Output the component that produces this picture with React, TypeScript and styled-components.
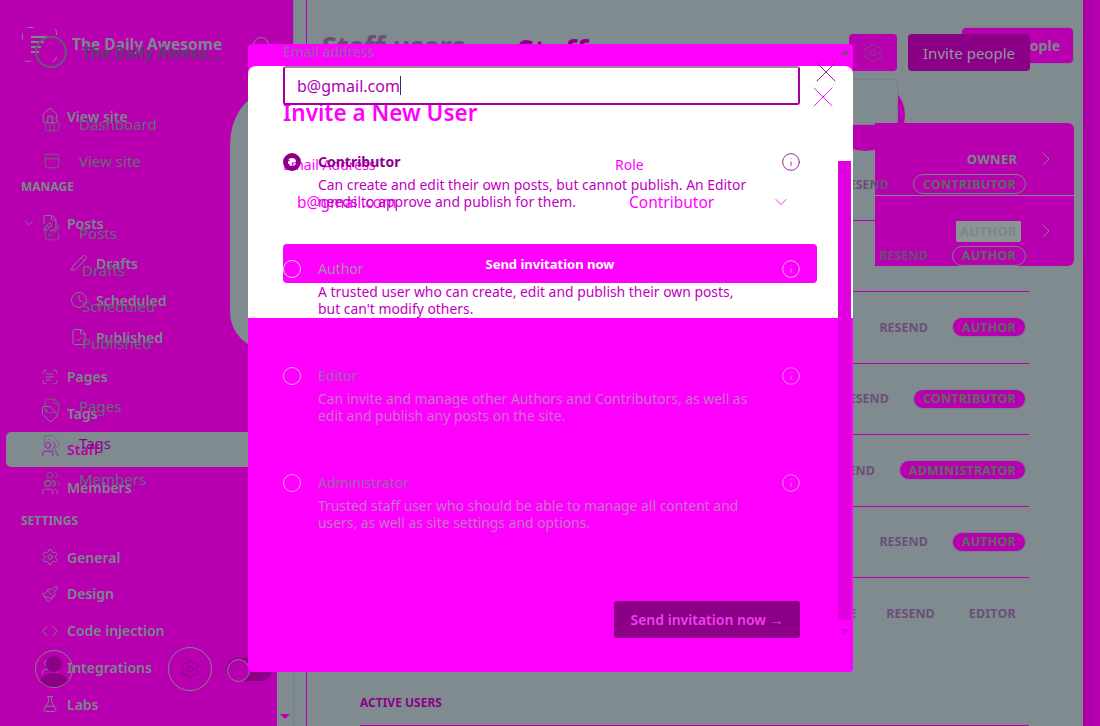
import React from 'react';
import styled, { createGlobalStyle } from 'styled-components';
import {
  ChevronDown,
  ChevronRight,
  Clock,
  Code,
  FileCheck,
  FilePen,
  FlaskConical,
  House,
  Info,
  PanelTop,
  Paintbrush,
  Pencil,
  ScanText,
  Settings,
  SquarePen,
  StickyNote,
  Tag,
  Users,
  X,
} from 'lucide-react';

const colors = {
  grey: '#808b90',
  plum: '#b800b0',
  deep: '#8c0088',
  magenta: '#ff00ff',
  ink: '#6b4f7a',
  ghost: '#78888b',
};

const GlobalStyle = createGlobalStyle`
  html, body {
    margin: 0;
    padding: 0;
    height: 100%;
    overflow: hidden;
    font-family: "Noto Sans", "Open Sans", sans-serif;
  }
  * { box-sizing: border-box; }
`;

const Page = styled.div`
  position: relative;
  width: 1100px;
  height: 726px;
  display: flex;
  overflow: hidden;
  background: ${colors.grey};
`;

/* sidebar */
const Sidebar = styled.aside`
  position: relative;
  flex: 0 0 294px;
  height: 100%;
  background: ${colors.plum};
  border-right: 1px solid #75828a;

  &::before {
    content: '';
    position: absolute;
    left: 230px;
    top: 95px;
    width: 64px;
    height: 255px;
    background: ${colors.grey};
    border-radius: 34px 0 0 38px / 50px 0 0 38px;
  }

  &::after {
    content: '';
    position: absolute;
    right: 0;
    bottom: 0;
    width: 16px;
    height: 60px;
    background: ${colors.grey};
  }
`;

const SideNotch = styled.span`
  position: absolute;
  left: 280px;
  bottom: 7px;
  z-index: 1;
  border-left: 5px solid transparent;
  border-right: 5px solid transparent;
  border-top: 5px solid ${colors.plum};
`;

const NavLayer = styled.nav<{ $top: number }>`
  position: absolute;
  inset: ${({ $top }) => $top}px 0 auto 0;
  display: flex;
  flex-direction: column;
`;

const Brand = styled.div<{ $left: number; $top: number; $dark?: boolean }>`
  position: absolute;
  left: ${({ $left }) => $left}px;
  top: ${({ $top }) => $top}px;
  font-size: 15.5px;
  line-height: 20px;
  font-weight: 700;
  white-space: nowrap;
  color: ${({ $dark }) => ($dark ? '#5d3a72' : colors.ghost)};
`;

const LogoMark = styled.svg`
  position: absolute;
  left: 22px;
  top: 27px;
`;

const SectionTitle = styled.div<{ $gap?: number }>`
  height: 18px;
  margin: ${({ $gap }) => $gap || 0}px 0 9px 21px;
  font-size: 12px;
  line-height: 18px;
  font-weight: 700;
  color: ${colors.ghost};
`;

const NavRow = styled.div<{ $sub?: boolean; $active?: boolean; $gap?: number; $dark?: boolean; $left: number }>`
  position: relative;
  height: ${({ $active, $dark }) => ($active ? 34.8 : $dark ? 36.5 : 36.8)}px;
  margin: ${({ $gap }) => $gap || 0}px 0 ${({ $active }) => ($active ? 2 : 0)}px 6px;
  padding-left: ${({ $left, $sub, $dark }) => $left - 6 + ($sub ? ($dark ? 39 : 29) : 0)}px;
  display: flex;
  align-items: center;
  gap: ${({ $dark, $sub }) => ($dark ? ($sub ? 0 : 18) : 8)}px;
  font-size: ${({ $dark }) => ($dark ? 15 : 14)}px;
  font-weight: ${({ $dark }) => ($dark ? 400 : 600)};
  color: ${({ $dark, $active }) => ($active ? colors.plum : $dark ? '#5f6f74' : colors.ghost)};
  background: ${({ $active }) => ($active ? colors.grey : 'transparent')};
  border-radius: 5px 0 0 5px;
  white-space: nowrap;

  svg { flex: none; }
`;

const DarkLabel = styled.span<{ $accent?: boolean }>`
  color: ${({ $accent }) => ($accent ? colors.deep : 'inherit')};
`;

const Caret = styled.span`
  position: absolute;
  left: 16px;
  top: 11px;
  display: flex;
  color: ${colors.ghost};
`;

const SideFooter = styled.div`
  position: absolute;
  left: 35px;
  top: 647px;
  display: flex;
  align-items: center;
  height: 44px;
`;

const Avatar = styled.div`
  position: relative;
  width: 38px;
  height: 38px;
  overflow: hidden;
  border-radius: 50%;
  border: 1px solid ${colors.ghost};

  &::before {
    content: '';
    position: absolute;
    left: 10px;
    top: 5px;
    width: 16px;
    height: 16px;
    border-radius: 50%;
    background: ${colors.deep};
  }

  &::after {
    content: '';
    position: absolute;
    left: 3px;
    top: 22px;
    width: 30px;
    height: 24px;
    border-radius: 50%;
    background: ${colors.deep};
  }
`;

const FooterCaret = styled.span`
  display: flex;
  margin: 8px 0 0 6px;
  color: #5f6f74;
`;

const GearRound = styled.div`
  width: 44px;
  height: 44px;
  margin-left: 75px;
  display: flex;
  align-items: center;
  justify-content: center;
  border: 1px solid ${colors.ghost};
  border-radius: 50%;
  color: ${colors.deep};
`;

const Toggle = styled.div`
  width: 46px;
  height: 23px;
  margin-left: 14px;
  padding: 1px;
  border-radius: 12px;
  background: ${colors.deep};

  &::before {
    content: '';
    display: block;
    width: 21px;
    height: 21px;
    border-radius: 50%;
    background: ${colors.plum};
    border: 1px solid ${colors.ghost};
  }
`;

/* main area behind the modal */
const Main = styled.main`
  position: relative;
  flex: 1;
  height: 100%;
  padding-left: 12px;
`;

const MainInner = styled.div`
  position: relative;
  height: 100%;
  border-left: 1px solid ${colors.plum};
  display: flex;
  flex-direction: column;
`;

const HeaderRow = styled.header`
  height: 149px;
  padding: 34px 53px 0 15px;
  display: flex;
  align-items: flex-start;
`;

const PageTitle = styled.h1`
  margin: 0;
  display: flex;
  gap: 52px;
  font-size: 30px;
  line-height: 34px;
  font-weight: 700;
  color: ${colors.ink};
`;

const PageTitleBack = styled.span`
  margin-top: -5px;
  font-size: 27px;
`;

const PageTitleStrong = styled.span`
  color: ${colors.deep};
`;

const Actions = styled.div`
  margin-left: auto;
  display: flex;
  gap: 11px;
`;

const GearButton = styled.div`
  width: 48px;
  height: 37px;
  display: flex;
  align-items: center;
  justify-content: center;
  border-radius: 4px;
  background: ${colors.plum};
  color: #7b4a80;
`;

const InviteButton = styled.div`
  width: 122px;
  height: 37px;
  display: flex;
  align-items: center;
  justify-content: center;
  border-radius: 4px;
  background: ${colors.deep};
  color: #8f9a9c;
  font-size: 15px;
`;

const GhostInvite = styled.div`
  position: absolute;
  left: 667px;
  top: 27px;
  width: 113px;
  height: 37px;
  display: flex;
  align-items: center;
  justify-content: flex-end;
  padding-right: 13px;
  border: 1px solid #75828a;
  border-radius: 5px;
  background: ${colors.plum};
  color: ${colors.ghost};
  font-size: 14px;
  font-weight: 700;
`;

const AvatarRing = styled.div`
  position: absolute;
  left: 531px;
  top: 79px;
  width: 80px;
  height: 72px;
  border-radius: 50%;
  background: ${colors.plum};
`;

const AvatarBox = styled.div`
  position: absolute;
  left: 556px;
  top: 79px;
  width: 48px;
  height: 46px;
  border-radius: 0 4px 4px 0;
  border: 1px solid #75828a;
  background: ${colors.grey};
`;

const OwnerCard = styled.section`
  position: absolute;
  left: 581px;
  top: 123px;
  width: 199px;
  height: 143px;
  border-radius: 0 6px 6px 0;
  background: ${colors.plum};
`;

const CardRow = styled.div`
  height: 71.5px;
  padding-right: 16px;
  display: flex;
  align-items: center;
  justify-content: flex-end;
  gap: 13px;
  color: ${colors.ghost};

  & + & {
    border-top: 1px solid ${colors.ghost};
  }
`;

const RoleStamp = styled.span<{ $filled?: boolean }>`
  width: ${({ $filled }) => ($filled ? 65 : 58)}px;
  height: ${({ $filled }) => ($filled ? 22 : 18)}px;
  display: flex;
  align-items: center;
  justify-content: center;
  border-radius: 2px;
  background: ${({ $filled }) => ($filled ? '#8b9694' : 'transparent')};
  font-size: 13px;
  font-weight: 700;
  letter-spacing: 0.3px;
  color: ${colors.ghost};
`;

const Table = styled.div`
  position: relative;
  margin: 0 54px 0 53px;
  display: flex;
  flex-direction: column;
`;

const UserRow = styled.div`
  height: 71.5px;
  padding-right: 3px;
  display: flex;
  align-items: center;
  justify-content: flex-end;
  gap: 24px;
  border-bottom: 1px solid ${colors.plum};
  font-size: 12.5px;
  font-weight: 700;
  color: ${colors.ink};

  &:last-child { border-bottom: 0; }
`;

const RevokeLink = styled.span`
  margin-right: 6px;
`;

const RolePill = styled.span<{ $plain?: boolean }>`
  padding: ${({ $plain }) => ($plain ? '0 10px' : '0 9px')};
  height: 20px;
  display: flex;
  align-items: center;
  border-radius: 10px;
  border: ${({ $plain }) => ($plain ? '0' : '1px solid #75828a')};
  background: ${({ $plain }) => ($plain ? 'transparent' : colors.plum)};
  color: ${({ $plain }) => ($plain ? colors.ink : '#5f6a62')};
  font-size: 12.5px;
  letter-spacing: 0.2px;
`;

const ActiveHeading = styled.div`
  margin: 43px 54px 0 53px;
  padding-bottom: 12px;
  border-bottom: 1px solid ${colors.plum};
  font-size: 12px;
  line-height: 20px;
  font-weight: 700;
  color: ${colors.deep};
`;

const RightStrip = styled.div`
  flex: 0 0 17px;
  height: 100%;
  background: linear-gradient(90deg, #a800a2, #b800b0);
`;

/* modal */
const StrayRing = styled.div`
  position: absolute;
  left: 253px;
  top: 37px;
  width: 16px;
  height: 16px;
  border-radius: 50%;
  border: 1px solid ${colors.ghost};
`;

const Modal = styled.div`
  position: absolute;
  left: 248px;
  top: 44px;
  width: 605px;
  height: 628px;
  overflow: hidden;
  border-radius: 4px;
  background: ${colors.magenta};

  &::before {
    content: '';
    position: absolute;
    left: 0;
    right: 0;
    top: 22px;
    height: 252px;
    border-radius: 8px 8px 0 0;
    background: #fff;
  }
`;

const ListLayer = styled.div`
  position: relative;
  padding-left: 35px;
  width: 552px;
`;

const EmailCaption = styled.div`
  height: 22px;
  font-size: 14px;
  line-height: 16px;
  color: #8a6aa0;
`;

const EmailInput = styled.div`
  width: 517px;
  height: 39px;
  margin-bottom: 19px;
  padding-left: 12px;
  display: flex;
  align-items: center;
  border: 2px solid #a000a0;
  border-top-color: #9a8aa0;
  border-radius: 3px;
  font-size: 16px;
  color: #b000b8;
`;

const TextCaret = styled.span`
  width: 1px;
  height: 19px;
  background: #3a2a60;
`;

const RoleRow = styled.div<{ $first?: boolean }>`
  position: relative;
  width: 517px;
  height: 107px;
  padding: 28px 0 0 35px;
  border-bottom: 1px solid ${({ $first }) => ($first ? 'transparent' : '#f400f4')};
`;

const Radio = styled.span<{ $on?: boolean; $tint: string }>`
  position: absolute;
  left: 0;
  top: 29px;
  width: 18px;
  height: 18px;
  border-radius: 50%;
  border: ${({ $on, $tint }) => ($on ? `5px solid ${colors.deep}` : `1px solid ${$tint}`)};
`;

const RoleInfo = styled.span<{ $tint: string }>`
  position: absolute;
  right: -1px;
  top: 28px;
  display: flex;
  color: ${({ $tint }) => $tint};
`;

const RoleName = styled.div<{ $tint: string; $bold?: boolean }>`
  font-size: 14px;
  line-height: 20px;
  font-weight: ${({ $bold }) => ($bold ? 700 : 400)};
  color: ${({ $tint }) => $tint};
`;

const RoleText = styled.div<{ $tint: string }>`
  margin-top: 4px;
  font-size: 13.9px;
  line-height: 17px;
  white-space: nowrap;
  color: ${({ $tint }) => $tint};
`;

const FormLayer = styled.div`
  position: absolute;
  inset: 0 auto auto 35px;
  width: 534px;
  padding-top: 54px;
`;

const FormTitle = styled.h2`
  margin: 0 0 28px;
  font-size: 22.5px;
  line-height: 29px;
  font-weight: 600;
  color: ${colors.magenta};
`;

const FieldGrid = styled.div`
  display: grid;
  grid-template-columns: 332px 1fr;
`;

const Field = styled.div`
  height: 89px;
  color: ${colors.magenta};
`;

const FieldLabel = styled.div`
  font-size: 14px;
  line-height: 20px;
`;

const FieldValue = styled.div`
  width: 185px;
  margin-top: 17px;
  padding: 0 9px 0 14px;
  display: flex;
  align-items: center;
  justify-content: space-between;
  font-size: 15.5px;
  line-height: 20px;
`;

const SubmitWide = styled.div`
  height: 39px;
  display: flex;
  align-items: center;
  justify-content: center;
  border-radius: 4px;
  background: ${colors.magenta};
  color: #fff;
  font-size: 13px;
  font-weight: 700;
`;

const CloseIcon = styled.span<{ $right: number; $top: number; $tint: string }>`
  position: absolute;
  right: ${({ $right }) => $right}px;
  top: ${({ $top }) => $top}px;
  display: flex;
  color: ${({ $tint }) => $tint};
`;

const ScrollTrack = styled.div`
  position: absolute;
  right: 2px;
  top: 0;
  width: 13px;
  height: 594px;
`;

const ScrollThumb = styled.div`
  position: absolute;
  left: 0;
  right: 0;
  top: 117px;
  height: 459px;
  background: #e000e0;
`;

const ScrollArrow = styled.span<{ $down?: boolean }>`
  position: absolute;
  left: 2px;
  ${({ $down }) => ($down ? 'bottom: 4px;' : 'top: 6px;')}
  border-left: 5px solid transparent;
  border-right: 5px solid transparent;
  ${({ $down }) =>
    $down ? 'border-top: 5px solid #d800d8;' : 'border-bottom: 5px solid #7a4a84;'}
`;

const SendButton = styled.div`
  position: absolute;
  right: 53px;
  top: 557px;
  width: 186px;
  height: 37px;
  display: flex;
  align-items: center;
  justify-content: center;
  border-radius: 3px;
  background: ${colors.deep};
  color: #f040f0;
  font-size: 14px;
  font-weight: 600;
`;

const s = 18;

const backNav = [
  { label: 'View site', icon: <House size={s} strokeWidth={1.2} /> },
];
const manageNav = [
  { label: 'Posts', icon: <FilePen size={s} strokeWidth={1.2} /> },
  { label: 'Drafts', icon: <Pencil size={s} strokeWidth={1.2} />, sub: true, gap: 3.5 },
  { label: 'Scheduled', icon: <Clock size={s} strokeWidth={1.2} />, sub: true },
  { label: 'Published', icon: <FileCheck size={s} strokeWidth={1.2} />, sub: true },
  { label: 'Pages', icon: <ScanText size={s} strokeWidth={1.2} />, gap: 3 },
  { label: 'Tags', icon: <Tag size={s} strokeWidth={1.2} /> },
  { label: 'Staff', icon: <Users size={s} strokeWidth={1.2} />, active: true },
  { label: 'Members', icon: <Users size={s} strokeWidth={1.2} /> },
];
const settingsNav = [
  { label: 'General', icon: <Settings size={s} strokeWidth={1.2} /> },
  { label: 'Design', icon: <Paintbrush size={s} strokeWidth={1.2} /> },
  { label: 'Code injection', icon: <Code size={s} strokeWidth={1.2} /> },
  { label: 'Integrations', icon: <Users size={s} strokeWidth={1.2} /> },
  { label: 'Labs', icon: <FlaskConical size={s} strokeWidth={1.2} /> },
];

const frontNav = [
  { label: 'Dashboard', icon: <House size={s} strokeWidth={1.2} /> },
  { label: 'View site', icon: <PanelTop size={s} strokeWidth={1.2} /> },
  { label: 'Posts', icon: <SquarePen size={s} strokeWidth={1.2} />, gap: 36 },
  { label: 'Drafts', sub: true },
  { label: 'Scheduled', sub: true },
  { label: 'Published', sub: true },
  { label: 'Pages', icon: <StickyNote size={s} strokeWidth={1.2} />, gap: 27 },
  { label: 'Tags', icon: <Tag size={s} strokeWidth={1.2} />, accent: true },
  { label: 'Members', icon: <Users size={s} strokeWidth={1.2} /> },
];

const users = [
  { role: 'CONTRIBUTOR' },
  { role: 'AUTHOR' },
  { role: 'AUTHOR' },
  { role: 'CONTRIBUTOR' },
  { role: 'ADMINISTRATOR' },
  { role: 'AUTHOR' },
  { role: 'EDITOR', plain: true },
];

const roles = [
  {
    name: 'Contributor',
    lines: ['Can create and edit their own posts, but cannot publish. An Editor', 'needs to approve and publish for them.'],
    title: colors.deep,
    text: '#c000c0',
    ring: colors.deep,
    on: true,
  },
  {
    name: 'Author',
    lines: ['A trusted user who can create, edit and publish their own posts,', "but can't modify others."],
    title: '#a890a8',
    text: '#c000c0',
    ring: '#e6d0e6',
  },
  {
    name: 'Editor',
    lines: ['Can invite and manage other Authors and Contributors, as well as', 'edit and publish any posts on the site.'],
    title: '#9a6aa8',
    text: '#c878c8',
    ring: '#f0a0f0',
  },
  {
    name: 'Administrator',
    lines: ['Trusted staff user who should be able to manage all content and', 'users, as well as site settings and options.'],
    title: '#9a6aa8',
    text: '#c878c8',
    ring: '#f0a0f0',
  },
];

const App = () => (
  <Page>
    <GlobalStyle />
    <Sidebar>
      <LogoMark width="48" height="44" viewBox="0 0 48 44" fill="none">
        <rect x="0.5" y="0.5" width="34" height="34" rx="5" stroke={colors.ghost} strokeDasharray="6 22" />
        <path d="M9 10h17M9 15h13M9 20h10M9 25h8" stroke={colors.ghost} strokeWidth="2" />
        <circle cx="29" cy="25" r="15" stroke="#5a5f72" strokeWidth="2" />
      </LogoMark>
      <Brand $left={72} $top={34}>The Daily Awesome</Brand>
      <Brand $left={82} $top={43} $dark>The Daily Aweso...</Brand>

      <NavLayer $top={98}>
        {backNav.map((item) => (
          <NavRow key={item.label} $left={41}>{item.icon}{item.label}</NavRow>
        ))}
        <SectionTitle $gap={43}>MANAGE</SectionTitle>
        {manageNav.map((item) => (
          <NavRow key={item.label} $left={41} $sub={item.sub} $active={item.active} $gap={item.gap}>
            {item.label === 'Posts' && (
              <Caret><ChevronDown size={14} strokeWidth={1.4} /></Caret>
            )}
            {item.icon}
            {item.label}
          </NavRow>
        ))}
        <SectionTitle $gap={6}>SETTINGS</SectionTitle>
        {settingsNav.map((item) => (
          <NavRow key={item.label} $left={41}>{item.icon}{item.label}</NavRow>
        ))}
      </NavLayer>

      <NavLayer $top={106}>
        {frontNav.map((item) => (
          <NavRow key={item.label} $left={43} $dark $sub={item.sub} $gap={item.gap}>
            {item.icon}
            <DarkLabel $accent={item.accent}>{item.label}</DarkLabel>
          </NavRow>
        ))}
      </NavLayer>

      <SideFooter>
        <Avatar />
        <FooterCaret><ChevronDown size={14} strokeWidth={1.4} /></FooterCaret>
        <GearRound><Settings size={22} strokeWidth={1} /></GearRound>
        <Toggle />
      </SideFooter>
      <SideNotch />
    </Sidebar>

    <Main>
      <GhostInvite>ople</GhostInvite>
      <AvatarRing />
      <AvatarBox />
      <OwnerCard>
        <CardRow>
          <RoleStamp>OWNER</RoleStamp>
          <ChevronRight size={24} strokeWidth={1} />
        </CardRow>
        <CardRow>
          <RoleStamp $filled>AUTHOR</RoleStamp>
          <ChevronRight size={24} strokeWidth={1} />
        </CardRow>
      </OwnerCard>
      <MainInner>
        <HeaderRow>
          <PageTitle>
            <PageTitleBack>Staff users</PageTitleBack>
            <PageTitleStrong>Staff</PageTitleStrong>
          </PageTitle>
          <Actions>
            <GearButton><Settings size={22} strokeWidth={1} /></GearButton>
            <InviteButton>Invite people</InviteButton>
          </Actions>
        </HeaderRow>
        <Table>
          {users.map((user, i) => (
            <UserRow key={i}>
              <RevokeLink>REVOKE</RevokeLink>
              <span>RESEND</span>
              <RolePill $plain={user.plain}>{user.role}</RolePill>
            </UserRow>
          ))}
        </Table>
        <ActiveHeading>ACTIVE USERS</ActiveHeading>
      </MainInner>
    </Main>
    <RightStrip />

    <StrayRing />
    <Modal>
      <FormLayer>
        <FormTitle>Invite a New User</FormTitle>
        <FieldGrid>
          <Field>
            <FieldLabel>Email Address</FieldLabel>
            <FieldValue>b@gmail.com</FieldValue>
          </Field>
          <Field>
            <FieldLabel>Role</FieldLabel>
            <FieldValue>
              Contributor
              <ChevronDown size={20} strokeWidth={1} />
            </FieldValue>
          </Field>
        </FieldGrid>
        <SubmitWide>Send invitation now</SubmitWide>
      </FormLayer>

      <ListLayer>
        <EmailCaption>Email address</EmailCaption>
        <EmailInput>b@gmail.com<TextCaret /></EmailInput>
        {roles.map((role, i) => (
          <RoleRow key={role.name} $first={i === 0}>
            <Radio $on={role.on} $tint={role.ring} />
            <RoleName $tint={role.title} $bold={role.on}>{role.name}</RoleName>
            <RoleText $tint={role.text}>{role.lines[0]}<br />{role.lines[1]}</RoleText>
            <RoleInfo $tint={role.on ? colors.deep : role.ring}>
              <Info size={20} strokeWidth={1} />
            </RoleInfo>
          </RoleRow>
        ))}
      </ListLayer>

      <CloseIcon $right={9} $top={10} $tint={colors.deep}><X size={36} strokeWidth={0.6} /></CloseIcon>
      <CloseIcon $right={12} $top={35} $tint={colors.magenta}><X size={36} strokeWidth={0.6} /></CloseIcon>

      <ScrollTrack>
        <ScrollArrow />
        <ScrollThumb />
        <ScrollArrow $down />
      </ScrollTrack>
      <SendButton>Send invitation now →</SendButton>
    </Modal>
  </Page>
);

export default App;
